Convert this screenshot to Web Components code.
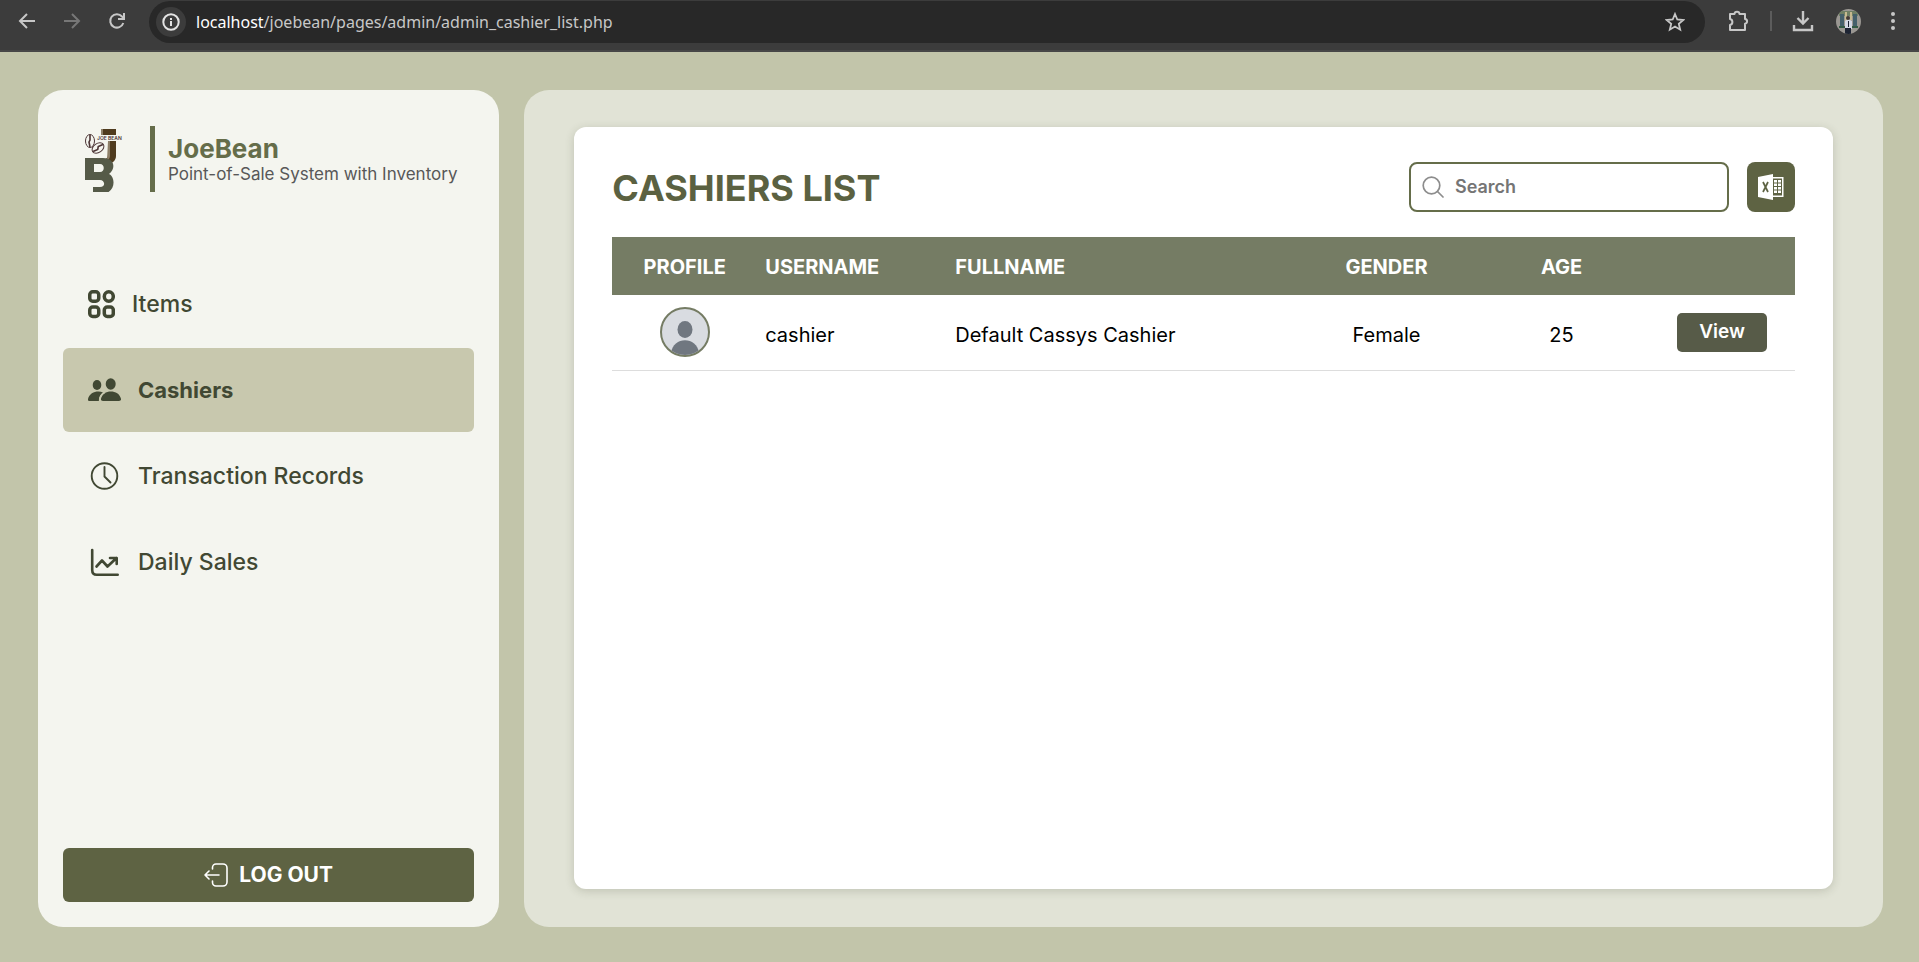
<!DOCTYPE html>
<html lang="en">
<head>
<meta charset="utf-8">
<title>JoeBean - Cashiers List</title>
<style>
html, body { margin: 0; }
body { font-family: Inter, "Liberation Sans", sans-serif; background: #c2c5aa; }
</style>
</head>
<body>
<jb-app></jb-app>

<template id="t-app">
<style>
:host { display: flex; flex-direction: column; min-height: 100vh; box-sizing: border-box; }
main { flex: 1; display: grid; grid-template-columns: 25% minmax(0, 1fr); gap: 25px; padding: 38px 36px 35px 38px; }
</style>
<browser-bar></browser-bar>
<main>
  <side-bar>
    <nav-item icon="grid">Items</nav-item>
    <nav-item icon="people" active>Cashiers</nav-item>
    <nav-item icon="clock">Transaction Records</nav-item>
    <nav-item icon="chart">Daily Sales</nav-item>
  </side-bar>
  <content-card heading="CASHIERS LIST">
    <search-box slot="tools"></search-box>
    <export-button slot="tools"></export-button>
    <cashier-table></cashier-table>
  </content-card>
</main>
</template>

<template id="t-browser">
<style>
:host { display: flex; align-items: center; box-sizing: border-box; height: 52px; padding: 0 14px 8px 15px; background: #3c3c3c; border-bottom: 2px solid #474747; color: #c7c7c7; }
button { display: grid; place-items: center; width: 24px; height: 24px; padding: 0; border: 0; background: none; color: inherit; }
svg { display: block; fill: none; stroke: currentColor; stroke-width: 2; }
.nav { display: flex; gap: 21px; margin-right: 20px; }
.nav .off { color: #777; }
.pill { flex: 1; display: flex; align-items: center; gap: 10px; height: 42px; margin-top: 2px; padding: 0 18px 0 7px; box-sizing: border-box; border-radius: 21px; background: #282828; }
.pill .info { width: 30px; height: 30px; border-radius: 15px; background: #3c3c3c; color: #e3e3e3; }
.url { flex: 1; font: 16px/24px "Noto Sans", sans-serif; color: #c7c7c7; }
.url b { font-weight: 400; color: #fff; }
.right { display: flex; align-items: center; margin-left: 21px; }
.sep { width: 2px; height: 20px; margin: 0 19px 0 20px; background: #5c5c5c; }
.dl { margin-right: 21px; }
.me { margin-right: 21px; }
.me svg { stroke: none; }
</style>
<div class="nav">
  <button aria-label="Back"><svg width="18" height="18" viewBox="0 0 18 18"><path d="M17 9H2M9 2L2 9l7 7"/></svg></button>
  <button class="off" aria-label="Forward"><svg width="18" height="18" viewBox="0 0 18 18"><path d="M1 9h15M9 2l7 7-7 7"/></svg></button>
  <button aria-label="Reload"><svg width="18" height="18" viewBox="0 0 18 18"><path d="M15.300 11A6.700 6.700 0 1 1 14 4.500L15.500 6M16 1v6h-6"/></svg></button>
</div>
<div class="pill">
  <button class="info" aria-label="Site information"><svg width="18" height="18" viewBox="0 0 18 18"><circle cx="9" cy="9" r="7.700"/><path d="M9 8v5M9 5v2"/></svg></button>
  <span class="url"><b>localhost</b>/joebean/pages/admin/admin_cashier_list.php</span>
  <button aria-label="Bookmark"><svg width="20" height="20" viewBox="0 0 20 20"><path stroke-width="1.800" d="M10 2l2.300 5.500 6 .5-4.500 3.900 1.400 5.800L10 14.600l-5.200 3.100 1.400-5.800L1.700 8l6-.5z"/></svg></button>
</div>
<div class="right">
  <button aria-label="Extensions"><svg width="22" height="22" viewBox="0 0 22 22"><path d="M3 4h4.500c.2-3 4.800-3 5 0H18v5c2.800.3 2.800 4.400 0 4.700V20H3v-5c3.200-.6 3.200-5.400 0-6z" stroke-linejoin="round"/></svg></button>
  <span class="sep"></span>
  <button class="dl" aria-label="Downloads"><svg width="22" height="22" viewBox="0 0 22 22"><path d="M11 1v12M5.500 8l5.500 5.500L16.500 8M2 15v5h18v-5" stroke-width="2.400"/></svg></button>
  <button class="me" aria-label="Profile"><svg width="25" height="25" viewBox="0 0 25 25"><defs><clipPath id="c"><circle cx="12.500" cy="12.500" r="12.500"/></clipPath></defs><g clip-path="url(#c)"><path fill="#9a9792" d="M0 0h25v25H0z"/><path fill="#6f7f64" d="M3 2h19v5H3z"/><path fill="#44606b" d="M4 5h4v12H4zM17 5h4v13h-4z"/><path fill="#c6b98f" d="M9 3h2v10H9zM14 3h2v8h-2z"/><path fill="#345a44" d="M3 17h19v2H3z"/><path fill="#d3d8e4" d="M9 12l3-2 4 2v8H9z"/><circle cx="12" cy="9" r="2" fill="#433a36"/><path fill="#1d2433" d="M12 12h1v6h-1zM9 19h6v6H9z"/></g></svg></button>
  <button aria-label="Menu"><svg width="6" height="20" viewBox="0 0 6 20" style="fill:currentColor;stroke:none"><circle cx="3" cy="3" r="2"/><circle cx="3" cy="10" r="2"/><circle cx="3" cy="17" r="2"/></svg></button>
</div>
</template>

<template id="t-side">
<style>
:host { display: flex; flex-direction: column; box-sizing: border-box; padding: 36px 25px 25px; border-radius: 25px; background: #f4f5ef; }
header { display: flex; align-items: center; padding-left: 20px; margin-bottom: 70px; }
.logo { flex: none; margin-right: 25px; }
.brand { flex: 1; display: flex; flex-direction: column; justify-content: center; box-sizing: border-box; height: 66px; padding-top: 2px; border-left: 5px solid #656d4a; padding-left: 13px; white-space: nowrap; }
h1 { margin: 0; font-size: 26px; line-height: 28px; font-weight: 700; color: #656d4a; }
p { margin: 0; font-size: 17px; line-height: 22px; color: #585858; }
nav { display: flex; flex-direction: column; gap: 2px; }
button { display: flex; align-items: center; justify-content: center; gap: 11px; height: 54px; margin-top: auto; padding: 0; border: 0; border-radius: 6px; background: #5e6343; color: #fff; font: 700 21px/28px Inter, sans-serif; }
</style>
<header>
  <svg class="logo" width="42" height="66" viewBox="0 0 42 66" aria-label="JoeBean logo">
    <path fill="#4f3b1e" d="M18 3h15v6H18zM25 15h8v15c0 4-3 7-7 8h-8v-5c5 1 7-1 7-4z"/>
    <path fill="#8d7f68" d="M18 3h2v6h-2zM25 15h2v15c0 2-1 3-3 4z"/>
    <text x="14" y="14" font-size="5" font-weight="600" fill="#4b3434" font-family="Inter">JOE BEAN</text>
    <g fill="none" stroke="#4b3434"><ellipse cx="7" cy="15" rx="4.500" ry="6.500"/><path stroke-width="1.600" d="M7 9v5l-1 2 1 5"/><g transform="rotate(55 15 22)"><ellipse cx="15" cy="22" rx="4.500" ry="6.500"/><path stroke-width="1.600" d="M15 16l-1 5 2 2-1 5"/></g></g>
    <path fill="#555a48" fill-rule="evenodd" d="M2 32h18c12 0 13 11 6 16 7 3 7 20-8 20H10v-7h7c6 0 5-7 0-7H2zM11 38v8h6c5 0 5-8 0-8z"/>
  </svg>
  <div class="brand"><h1>JoeBean</h1><p>Point-of-Sale System with Inventory</p></div>
</header>
<nav><slot></slot></nav>
<button><svg width="24" height="24" viewBox="0 0 24 24" fill="none" stroke="#fff" stroke-width="1.600" stroke-linecap="round" stroke-linejoin="round"><path d="M8.500 6V4.500a3.500 3.500 0 0 1 3.500-3.500h7a4 4 0 0 1 4 4v14a4 4 0 0 1-4 4h-7a3.500 3.500 0 0 1-3.500-3.500V18M15 12H1M5 8l-4 4 4 4"/></svg>LOG OUT</button>
</template>

<template id="t-nav">
<style>
:host { display: block; }
a { display: flex; align-items: center; gap: 17px; height: 84px; padding-left: 25px; border-radius: 6px; color: #414833; text-decoration: none; font-size: 23px; line-height: 28px; font-weight: 500; white-space: nowrap; }
:host([active]) a { background: #c8c8ae; font-weight: 700; font-size: 22px; }
svg { flex: none; display: block; }
</style>
<a href="#"><span class="icon"></span><span><slot></slot></span></a>
</template>

<template id="t-card">
<style>
:host { display: flex; box-sizing: border-box; padding: 37px 50px 38px; border-radius: 25px; background: #e1e3d6; }
section { flex: 1; min-width: 0; padding: 35px 38px; border-radius: 12px; background: #fff; box-shadow: 0 2px 10px rgba(60,65,40,.2); }
.top { display: flex; align-items: center; justify-content: space-between; margin-bottom: 25px; }
h2 { margin: 0; padding-top: 2px; font-size: 36px; line-height: 48px; font-weight: 700; color: #5b6141; }
.tools { display: flex; gap: 18px; }
</style>
<section>
  <div class="top"><h2></h2><div class="tools"><slot name="tools"></slot></div></div>
  <slot></slot>
</section>
</template>

<template id="t-search">
<style>
:host { display: block; }
label { display: flex; align-items: center; gap: 11px; box-sizing: border-box; width: 320px; height: 50px; padding: 0 11px; border: 2px solid #656d4a; border-radius: 8px; }
input { flex: 1; min-width: 0; padding: 0; border: 0; outline: 0; background: none; font: 600 18px/24px Inter, sans-serif; color: #333; }
input::placeholder { color: #757575; }
</style>
<label><svg width="22" height="22" viewBox="0 0 22 22" fill="none" stroke="#8d8d8d" stroke-width="1.700" stroke-linecap="round"><circle cx="9.500" cy="9.500" r="8.300"/><path d="M15.500 15.500L21 21"/></svg>
<input type="search" placeholder="Search" aria-label="Search"></label>
</template>

<template id="t-export">
<style>
:host { display: block; }
button { display: grid; place-items: center; width: 48px; height: 50px; padding: 0; border: 0; border-radius: 8px; background: #5e6343; }
</style>
<button aria-label="Export to Excel"><svg width="26" height="26" viewBox="0 0 26 26"><path fill="#fff" fill-rule="evenodd" d="M0 3l15-3v26L0 23zM15 3h10.500v20H15v-1.500h9v-17h-9z"/><path fill="#fff" d="M16 6h3v2.500h-3zM20 6h3v2.500h-3zM16 9.500h3V12h-3zM20 9.500h3V12h-3zM16 13h3v2.500h-3zM20 13h3v2.500h-3zM16 16.500h3V19h-3zM20 16.500h3V19h-3z"/><path d="M5 8l5 10M10 8L5 18" stroke="#5e6343" stroke-width="1.700"/></svg></button>
</template>

<template id="t-table">
<style>
:host { display: block; }
table { width: 100%; table-layout: fixed; border-collapse: collapse; font-size: 20px; line-height: 26px; color: #000; }
th { height: 58px; padding: 2px 8px 0; box-sizing: border-box; background: #757c64; color: #fff; font-size: 20px; font-weight: 700; text-align: left; }
td { height: 75px; padding: 6px 8px 0; box-sizing: border-box; border-bottom: 1px solid #ddd; }
td.pic, td.act { padding-top: 0; }
.mid { text-align: center; padding-left: 0; padding-right: 0; }
.pic svg { display: block; margin: 0 auto; }
.c1 { width: 145px; } .c2 { width: 190px; } .c4, .c5 { width: 175px; } .c6 { width: 146px; }
button { width: 90px; height: 39px; padding: 0; border: 0; border-radius: 5px; background: #575b48; color: #fff; font: 600 19px/24px Inter, sans-serif; }
</style>
<table>
  <colgroup><col class="c1"><col class="c2"><col><col class="c4"><col class="c5"><col class="c6"></colgroup>
  <thead><tr><th class="mid">PROFILE</th><th>USERNAME</th><th>FULLNAME</th><th class="mid">GENDER</th><th class="mid">AGE</th><th></th></tr></thead>
  <tbody><tr>
    <td class="mid pic"><svg width="50" height="50" viewBox="0 0 50 50" role="img" aria-label="Profile picture"><defs><clipPath id="c"><circle cx="25" cy="25" r="23"/></clipPath></defs><circle cx="25" cy="25" r="24" fill="#d9dce1" stroke="#757c64" stroke-width="2"/><g clip-path="url(#c)" fill="#707780"><ellipse cx="25" cy="22.500" rx="7.500" ry="8.500"/><path d="M11 49v-3c2-17 26-17 28 0v3z"/></g></svg></td>
    <td>cashier</td><td>Default Cassys Cashier</td><td class="mid">Female</td><td class="mid">25</td><td class="mid act"><button>View</button></td>
  </tr></tbody>
</table>
</template>

<script>
const ICONS = {
  grid: '<svg width="27" height="29" viewBox="0 0 27 29" fill="none" stroke="#414833" stroke-width="3.500"><rect x="1.750" y="1.750" width="9" height="9.500" rx="3"/><ellipse cx="20.800" cy="6.500" rx="4.500" ry="4.750"/><rect x="1.750" y="17" width="9" height="9.500" rx="3"/><rect x="16.300" y="17" width="9" height="9.500" rx="3"/></svg>',
  people: '<svg width="33" height="24" viewBox="0 0 33 24" fill="#414833"><ellipse cx="9" cy="7" rx="4.300" ry="5"/><ellipse cx="22.700" cy="6" rx="5" ry="5.700"/><path d="M11 23c-.5-3 1-6 4-8.500C10 12 1.500 14 0 21c-.2 1.200.3 2 1.500 2z"/><path d="M15 23c-1.500 0-2.300-.8-2-2.200C14.500 11 31 11 33 20.800c.3 1.400-.5 2.200-2 2.200z"/><path d="M17 14.200c-3 1.500-5.500 4.500-5.300 8.800" fill="none" stroke="#c8c8ae" stroke-width="1.600"/></svg>',
  clock: '<svg width="33" height="30" viewBox="0 0 33 30" fill="none" stroke="#414833" stroke-width="1.900" stroke-linecap="round"><circle cx="16.500" cy="15" r="12.800"/><path d="M16.500 6v9.500l6 6"/></svg>',
  chart: '<svg width="33" height="29" viewBox="0 0 33 29" fill="none" stroke="#414833" stroke-width="2.600" stroke-linecap="round" stroke-linejoin="round"><path d="M4.200 2v20c0 3 1.500 4.800 4.500 4.800h21M8.500 18.500l5.500-6 5.500 6L28.500 10M22 10h6.700v6"/></svg>'
};

class TemplateElement extends HTMLElement {
  constructor() {
    super();
    this.attachShadow({ mode: 'open' }).append(
      document.getElementById(this.constructor.template).content.cloneNode(true));
  }
}
class BrowserBar extends TemplateElement { static template = 't-browser'; }
class SideBar extends TemplateElement { static template = 't-side'; }
class NavItem extends TemplateElement {
  static template = 't-nav';
  connectedCallback() { this.shadowRoot.querySelector('.icon').innerHTML = ICONS[this.getAttribute('icon')]; }
}
class ContentCard extends TemplateElement {
  static template = 't-card';
  connectedCallback() { this.shadowRoot.querySelector('h2').textContent = this.getAttribute('heading'); }
}
class SearchBox extends TemplateElement { static template = 't-search'; }
class ExportButton extends TemplateElement { static template = 't-export'; }
class CashierTable extends TemplateElement { static template = 't-table'; }
class App extends TemplateElement { static template = 't-app'; }

customElements.define('browser-bar', BrowserBar);
customElements.define('side-bar', SideBar);
customElements.define('nav-item', NavItem);
customElements.define('content-card', ContentCard);
customElements.define('search-box', SearchBox);
customElements.define('export-button', ExportButton);
customElements.define('cashier-table', CashierTable);
customElements.define('jb-app', App);
</script>
</body>
</html>
